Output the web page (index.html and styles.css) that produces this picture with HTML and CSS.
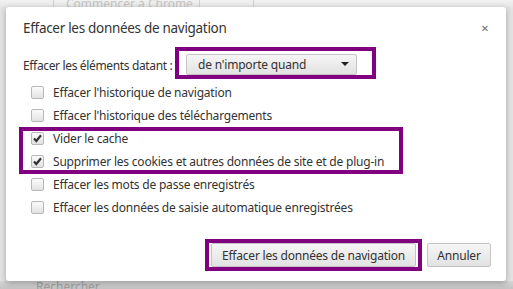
FILE: index.html
```html
<!DOCTYPE html>
<html lang="fr">
<head>
  <meta charset="UTF-8">
  <title>Effacer les données de navigation</title>
  <link rel="stylesheet" href="styles.css">
</head>
<body>
  <!-- Page behind the dialog -->
  <div class="page">
    <div class="tabbar">
      <div class="tab"></div>
      <div class="tab tab-title">Commencer à Chrome</div>
      <div class="tab"></div>
    </div>
    <div class="page-foot">Rechercher</div>
  </div>

  <!-- Dialog -->
  <div class="dialog">
    <div class="head">
      <span class="title">Effacer les données de navigation</span>
      <span class="close">&#x2715;</span>
    </div>

    <div class="range">
      <span class="range-label">Effacer les éléments datant&nbsp;:</span>
      <div class="select">
        <span>de n'importe quand</span>
        <span class="arrow"></span>
      </div>
    </div>

    <div class="options">
      <label class="option"><span class="box"></span>Effacer l'historique de navigation</label>
      <label class="option"><span class="box"></span>Effacer l'historique des téléchargements</label>
      <label class="option"><span class="box checked"><svg width="11" height="11" viewBox="0 0 11 11"><path d="M2 5.5 L4.3 8 L9 2.2" fill="none" stroke="#333" stroke-width="2.2"/></svg></span>Vider le cache</label>
      <label class="option"><span class="box checked"><svg width="11" height="11" viewBox="0 0 11 11"><path d="M2 5.5 L4.3 8 L9 2.2" fill="none" stroke="#333" stroke-width="2.2"/></svg></span>Supprimer les cookies et autres données de site et de plug-in</label>
      <label class="option"><span class="box"></span>Effacer les mots de passe enregistrés</label>
      <label class="option"><span class="box"></span>Effacer les données de saisie automatique enregistrées</label>
    </div>

    <div class="foot">
      <button class="btn btn-main">Effacer les données de navigation</button>
      <button class="btn btn-cancel">Annuler</button>
    </div>

    <!-- Highlight frames drawn over the dialog -->
    <div class="mark mark-range"></div>
    <div class="mark mark-checked"></div>
    <div class="mark mark-button"></div>
  </div>
</body>
</html>
```

FILE: styles.css
```css
/* Base */
body {
  margin: 0;
  width: 513px;
  height: 289px;
  overflow: hidden;
  background: #e3e3e3;
  font-family: "Noto Sans", "DejaVu Sans", sans-serif;
  color: #333;
}

/* Page behind */
.page {
  height: 289px;
  display: flex;
  flex-direction: column;
  justify-content: space-between;
}
.tabbar {
  height: 7px;
  display: flex;
  background: linear-gradient(#f2f2f2, #e6e6e6);
}
.tab {
  width: 53px;
  border-right: 1px solid #d0d0d0;
}
.tab-title {
  width: 133px;
  padding-left: 12px;
  font-size: 12px;
  line-height: 8px;
  color: #c4c4c4;
  white-space: nowrap;
}
.page-foot {
  padding-left: 36px;
  height: 8px;
  font-size: 12px;
  line-height: 12px;
  color: #a0a0a0;
  background: linear-gradient(#d6d6d6, #c4c4c4);
}

/* Dialog */
.dialog {
  position: absolute;
  left: 6px;
  top: 7px;
  width: 500px;
  height: 274px;
  background: #fff;
  border-radius: 3px;
  box-shadow: 0 2px 6px rgba(0, 0, 0, 0.28);
  font-size: 12px;
  letter-spacing: -0.2px;
}
.head {
  height: 42px;
  display: flex;
  align-items: center;
  justify-content: space-between;
  padding: 0 17px;
}
.title {
  font-size: 13.5px;
  letter-spacing: -0.3px;
  color: #333;
}
.close {
  font-size: 10px;
  font-weight: bold;
  color: #6e6e6e;
}

.range {
  height: 32px;
  display: flex;
  align-items: center;
  padding-left: 17px;
}
.range-label {
  width: 163px;
  white-space: nowrap;
  letter-spacing: -0.35px;
}
.select {
  margin-top: -2px;
  width: 171px;
  height: 21px;
  box-sizing: border-box;
  display: flex;
  align-items: center;
  justify-content: space-between;
  padding: 0 7px 0 11px;
  border: 1px solid #c4c4c4;
  border-radius: 2px;
  background: linear-gradient(#f6f6f6, #e2e2e2);
  color: #333;
}
.arrow {
  width: 0;
  height: 0;
  border-left: 4px solid transparent;
  border-right: 4px solid transparent;
  border-top: 4px solid #222;
}

.options {
  padding-left: 25px;
}
.option {
  height: 23px;
  display: flex;
  align-items: center;
  gap: 9px;
}
.box {
  width: 13px;
  height: 13px;
  box-sizing: border-box;
  border: 1px solid #b8b8b8;
  border-radius: 2px;
  background: linear-gradient(#fbfbfb, #e2e2e2);
  display: flex;
  align-items: center;
  justify-content: center;
}

.foot {
  position: absolute;
  right: 15px;
  bottom: 14px;
  display: flex;
  gap: 11px;
}
.btn {
  height: 24px;
  padding: 0;
  border: 1px solid #c4c4c4;
  border-radius: 2px;
  background: linear-gradient(#f6f6f6, #e2e2e2);
  font-family: inherit;
  font-size: 12px;
  letter-spacing: -0.2px;
  color: #333;
}
.btn-main {
  width: 205px;
}
.btn-cancel {
  width: 64px;
}

/* Purple highlight frames */
.mark {
  position: absolute;
  border: 4px solid #800080;
  box-sizing: border-box;
}
.mark-range {
  left: 169px;
  top: 40px;
  width: 201px;
  height: 32px;
}
.mark-checked {
  left: 13px;
  top: 120px;
  width: 384px;
  height: 47px;
}
.mark-button {
  left: 199px;
  top: 232px;
  width: 217px;
  height: 32px;
}
```
